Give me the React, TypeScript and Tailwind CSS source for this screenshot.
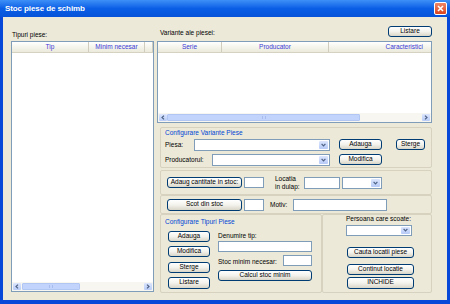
import type { ReactNode } from "react";

type Col = { label: string; w: string; align?: string };

function Btn({ children, className = "" }: { children: ReactNode; className?: string }) {
  return (
    <div
      className={`flex shrink-0 items-center justify-center rounded-[3px] border border-[#003C74] bg-gradient-to-b from-[#FFFFFF] via-[#F3F2EC] to-[#D9D6C8] text-[6.5px] leading-none text-black ${className}`}
    >
      {children}
    </div>
  );
}

function Field({ className = "" }: { className?: string }) {
  return <div className={`shrink-0 border border-[#7F9DB9] bg-white ${className}`} />;
}

function Combo({ className = "" }: { className?: string }) {
  return (
    <div className={`flex shrink-0 justify-end border border-[#7F9DB9] bg-white p-px ${className}`}>
      <div className="flex w-[9px] items-center justify-center rounded-[1px] bg-gradient-to-b from-[#DCE6FD] to-[#B6C9F6]">
        <svg width="5" height="4" viewBox="0 0 5 4">
          <path d="M0.6 0.8 L2.5 2.8 L4.4 0.8" fill="none" stroke="#4D6185" strokeWidth="1.2" />
        </svg>
      </div>
    </div>
  );
}

function Arrow({ dir }: { dir: "l" | "r" }) {
  return (
    <div className="flex w-[8px] shrink-0 items-center justify-center rounded-[1px] bg-gradient-to-b from-[#DCE6FD] to-[#B9CCF7]">
      <svg width="4" height="5" viewBox="0 0 4 5">
        <path
          d={dir === "l" ? "M3 0.6 L1 2.5 L3 4.4" : "M1 0.6 L3 2.5 L1 4.4"}
          fill="none"
          stroke="#4D6185"
          strokeWidth="1.2"
        />
      </svg>
    </div>
  );
}

function HScroll({ before, thumb }: { before: string; thumb: string }) {
  return (
    <div className="flex h-[9px] shrink-0 bg-[#F7F6F1] p-px">
      <Arrow dir="l" />
      <div className="flex flex-1">
        <div className={before} />
        <div className={`flex items-center justify-center rounded-[1px] border border-[#B2C6F4] bg-[#C3D4FC] ${thumb}`}>
          <div className="h-[3px] w-[4px] border-x border-[#A8BDEE]" />
        </div>
      </div>
      <Arrow dir="r" />
    </div>
  );
}

function ListView({
  cols,
  className,
  before,
  thumb,
}: {
  cols: Col[];
  className: string;
  before: string;
  thumb: string;
}) {
  return (
    <div className={`flex shrink-0 flex-col border border-[#7F9DB9] bg-white ${className}`}>
      <div className="flex h-[11px] shrink-0 border-b border-[#D5D2C2] bg-gradient-to-b from-[#FFFFFF] to-[#EBEADB]">
        {cols.map((c) => (
          <div
            key={c.label + c.w}
            className={`flex items-center border-r border-[#D0CDBE] text-[6.5px] leading-none text-[#3A3AD6] ${c.w} ${c.align ?? "justify-center"}`}
          >
            {c.label}
          </div>
        ))}
      </div>
      <div className="flex-1" />
      <HScroll before={before} thumb={thumb} />
    </div>
  );
}

function Caption({ children }: { children: ReactNode }) {
  return <div className="text-[6.5px] leading-none text-[#0046D5]">{children}</div>;
}

export default function App() {
  return (
    <div className="flex h-[304px] w-[450px] flex-col bg-[#0848D8] font-['Liberation_Sans',Arial,sans-serif] text-[6.5px] text-black">
      {/* title bar */}
      <div className="flex h-[17px] shrink-0 items-center bg-gradient-to-b from-[#3D8FF7] via-[#0A5EE6] to-[#0653D9] pl-[5px] pr-[3px]">
        <span className="text-[8px] font-bold leading-none tracking-[-0.1px] text-white">Stoc piese de schimb</span>
        <div className="ml-auto flex h-[13px] w-[13px] items-center justify-center rounded-[2px] border border-white bg-gradient-to-b from-[#EE8565] to-[#D9431C]">
          <svg width="7" height="7" viewBox="0 0 7 7">
            <path d="M1 1 L6 6 M6 1 L1 6" stroke="white" strokeWidth="1.6" />
          </svg>
        </div>
      </div>

      {/* body */}
      <div className="mx-[3px] mb-[4px] flex flex-1 bg-[#ECE9D8]">
        {/* left column */}
        <div className="ml-[8px] flex w-[143px] flex-col pt-[13px]">
          <div className="h-[9px] pl-px text-[6.5px] leading-[9px]">Tipuri piese:</div>
          <ListView
            className="mt-[2px] h-[251px]"
            cols={[
              { label: "Tip", w: "w-[77px]" },
              { label: "Minim necesar", w: "w-[56px]" },
              { label: "", w: "flex-1" },
            ]}
            before="w-px"
            thumb="w-[58px]"
          />
        </div>

        {/* right column */}
        <div className="ml-[3px] flex w-[275px] flex-col pt-[9px]">
          <div className="flex h-[11px] shrink-0 items-end justify-between">
            <span className="pb-px pl-[3px] leading-none">Variante ale piesei:</span>
            <Btn className="h-[11px] w-[44px]">Listare</Btn>
          </div>
          <ListView
            className="mt-[4px] h-[82px]"
            cols={[
              { label: "Serie", w: "w-[64px]" },
              { label: "Producator", w: "w-[107px]" },
              { label: "Caracteristici", w: "flex-1 border-r-0", align: "justify-end pr-[8px]" },
            ]}
            before="w-0"
            thumb="w-[193px]"
          />

          {/* Configurare Variante Piese */}
          <div className="ml-[3px] mt-[4px] flex h-[41px] w-[272px] shrink-0 flex-col rounded-[2px] border border-[#D6D2BF] pl-[4px] pt-[2px]">
            <Caption>Configurare Variante Piese</Caption>
            <div className="mt-[2px] flex h-[12px] items-center">
              <span className="w-[29px]">Piesa:</span>
              <Combo className="h-[12px] w-[136px]" />
              <Btn className="ml-[9px] h-[11px] w-[43px]">Adauga</Btn>
              <Btn className="ml-[14px] h-[11px] w-[29px]">Sterge</Btn>
            </div>
            <div className="mt-[3px] flex h-[12px] items-center">
              <span className="w-[47px]">Producatorul:</span>
              <Combo className="h-[12px] w-[118px]" />
              <Btn className="ml-[9px] h-[11px] w-[43px]">Modifica</Btn>
            </div>
          </div>

          {/* Adaug cantitate */}
          <div className="ml-[3px] mt-[2px] flex h-[25px] w-[272px] shrink-0 items-center rounded-[2px] border border-[#D6D2BF] pl-[6px]">
            <Btn className="h-[11px] w-[75px]">Adaug cantitate in stoc:</Btn>
            <Field className="ml-[2px] h-[11px] w-[20px]" />
            <div className="ml-[11px] w-[29px] leading-[8px]">
              Locatia
              <br />
              in dulap:
            </div>
            <Field className="h-[12px] w-[36px]" />
            <Combo className="ml-[2px] h-[12px] w-[40px]" />
          </div>

          {/* Scot din stoc */}
          <div className="ml-[3px] flex h-[19px] w-[272px] shrink-0 items-center rounded-[2px] border border-[#D6D2BF] pl-[6px]">
            <Btn className="h-[12px] w-[75px]">Scot din stoc</Btn>
            <Field className="ml-[2px] h-[12px] w-[20px]" />
            <span className="ml-[6px] w-[23px]">Motiv:</span>
            <Field className="h-[12px] w-[94px]" />
          </div>

          {/* bottom */}
          <div className="ml-[3px] flex h-[79px] w-[272px] shrink-0">
            <div className="flex w-[162px] flex-col rounded-[2px] border border-[#D6D2BF] pl-[4px] pt-[4px]">
              <Caption>Configurare Tipuri Piese</Caption>
              <div className="flex">
                <div className="ml-[3px] flex w-[42px] flex-col">
                  <Btn className="mt-[5px] h-[11px] w-[42px]">Adauga</Btn>
                  <Btn className="mt-[4px] h-[11px] w-[42px]">Modifica</Btn>
                  <Btn className="mt-[5px] h-[11px] w-[42px]">Sterge</Btn>
                  <Btn className="mt-[4px] h-[12px] w-[42px]">Listare</Btn>
                </div>
                <div className="ml-[8px] flex w-[94px] flex-col">
                  <span className="mt-[7px] leading-none">Denumire tip:</span>
                  <Field className="mt-[2px] h-[11px] w-[94px]" />
                  <div className="mt-[3px] flex h-[11px] items-center justify-between">
                    <span className="pt-[3px]">Stoc minim necesar:</span>
                    <Field className="h-[11px] w-[29px]" />
                  </div>
                  <Btn className="mt-[4px] h-[11px] w-[94px]">Calcul stoc minim</Btn>
                </div>
              </div>
            </div>
            <div className="flex flex-1 flex-col rounded-[2px] border border-[#D6D2BF] pl-[23px]">
              <span className="mt-px leading-none">Persoana care scoate:</span>
              <Combo className="mt-[2px] h-[11px] w-[66px]" />
              <Btn className="ml-px mt-[11px] h-[11px] w-[67px]">Cauta locatii piese</Btn>
              <Btn className="ml-px mt-[6px] h-[11px] w-[67px]">Continut locatie</Btn>
              <Btn className="ml-px mt-[2px] h-[12px] w-[67px]">INCHIDE</Btn>
            </div>
          </div>
        </div>
      </div>
    </div>
  );
}
